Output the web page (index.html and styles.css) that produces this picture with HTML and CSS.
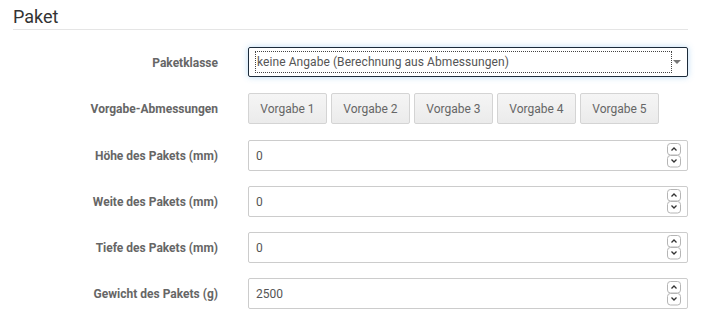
FILE: index.html
```html
<!DOCTYPE html>
<html lang="de">

<head>
    <meta charset="UTF-8">
    <meta name="viewport" content="width=device-width, initial-scale=1.0">
    <title>Paket</title>
    <link rel="stylesheet" href="styles.css">
</head>

<body>
    <section class="panel">
        <h2 class="panel-title">Paket</h2>

        <div class="form-grid">
            <label class="form-label">Paketklasse</label>
            <div class="select-box">
                <span class="select-text">keine Angabe (Berechnung aus Abmessungen)</span>
                <span class="select-arrow"></span>
            </div>

            <label class="form-label">Vorgabe-Abmessungen</label>
            <div class="preset-row">
                <button class="preset-btn">Vorgabe 1</button>
                <button class="preset-btn">Vorgabe 2</button>
                <button class="preset-btn">Vorgabe 3</button>
                <button class="preset-btn">Vorgabe 4</button>
                <button class="preset-btn">Vorgabe 5</button>
            </div>

            <label class="form-label">Höhe des Pakets (mm)</label>
            <div class="num-input">
                <span class="num-value">0</span>
                <svg class="spinner" width="14" height="25" viewBox="0 0 14 25">
                    <rect x="0.5" y="0.5" width="13" height="11.5" rx="3" fill="#fff" stroke="#b5b5b5"/>
                    <rect x="0.5" y="12.5" width="13" height="11.5" rx="3" fill="#fff" stroke="#b5b5b5"/>
                    <path d="M4.5 7.5 L7 5 L9.5 7.5" fill="none" stroke="#333" stroke-width="1.3"/>
                    <path d="M4.5 16.5 L7 19 L9.5 16.5" fill="none" stroke="#333" stroke-width="1.3"/>
                </svg>
            </div>

            <label class="form-label">Weite des Pakets (mm)</label>
            <div class="num-input">
                <span class="num-value">0</span>
                <svg class="spinner" width="14" height="25" viewBox="0 0 14 25">
                    <rect x="0.5" y="0.5" width="13" height="11.5" rx="3" fill="#fff" stroke="#b5b5b5"/>
                    <rect x="0.5" y="12.5" width="13" height="11.5" rx="3" fill="#fff" stroke="#b5b5b5"/>
                    <path d="M4.5 7.5 L7 5 L9.5 7.5" fill="none" stroke="#333" stroke-width="1.3"/>
                    <path d="M4.5 16.5 L7 19 L9.5 16.5" fill="none" stroke="#333" stroke-width="1.3"/>
                </svg>
            </div>

            <label class="form-label">Tiefe des Pakets (mm)</label>
            <div class="num-input">
                <span class="num-value">0</span>
                <svg class="spinner" width="14" height="25" viewBox="0 0 14 25">
                    <rect x="0.5" y="0.5" width="13" height="11.5" rx="3" fill="#fff" stroke="#b5b5b5"/>
                    <rect x="0.5" y="12.5" width="13" height="11.5" rx="3" fill="#fff" stroke="#b5b5b5"/>
                    <path d="M4.5 7.5 L7 5 L9.5 7.5" fill="none" stroke="#333" stroke-width="1.3"/>
                    <path d="M4.5 16.5 L7 19 L9.5 16.5" fill="none" stroke="#333" stroke-width="1.3"/>
                </svg>
            </div>

            <label class="form-label">Gewicht des Pakets (g)</label>
            <div class="num-input">
                <span class="num-value">2500</span>
                <svg class="spinner" width="14" height="25" viewBox="0 0 14 25">
                    <rect x="0.5" y="0.5" width="13" height="11.5" rx="3" fill="#fff" stroke="#b5b5b5"/>
                    <rect x="0.5" y="12.5" width="13" height="11.5" rx="3" fill="#fff" stroke="#b5b5b5"/>
                    <path d="M4.5 7.5 L7 5 L9.5 7.5" fill="none" stroke="#333" stroke-width="1.3"/>
                    <path d="M4.5 16.5 L7 19 L9.5 16.5" fill="none" stroke="#333" stroke-width="1.3"/>
                </svg>
            </div>
        </div>
    </section>
</body>

</html>
```

FILE: styles.css
```css
/* General Styles */

body {
    font-family: 'Roboto', sans-serif;
    margin: 0;
    padding: 0;
    background: #fff;
    color: #555;
}

.panel {
    padding: 6px 32px 0 13px;
}

.panel-title {
    font-size: 18px;
    font-weight: normal;
    color: #333;
    margin: 0;
    line-height: 22px;
    padding-bottom: 1px;
    border-bottom: 1px solid #e5e5e5;
}

.form-grid {
    display: grid;
    grid-template-columns: 205px 440px;
    grid-template-rows: 31px 32px repeat(4, 31px);
    column-gap: 30px;
    row-gap: 15px;
    margin-top: 17px;
    align-items: center;
}

.form-label {
    text-align: right;
    font-size: 12px;
    font-weight: bold;
    color: #666;
}

/* Select */

.select-box {
    position: relative;
    box-sizing: border-box;
    height: 30px;
    align-self: start;
    border: 1px solid #1c2b3a;
    border-radius: 2px;
    box-shadow: 0 0 6px rgba(102, 175, 233, 0.45);
    display: flex;
    align-items: center;
    padding: 0 16px 0 7px;
}

.select-text {
    flex: 1;
    font-size: 12px;
    letter-spacing: 0.07px;
    color: #555;
    line-height: 20px;
    padding: 0 1px;
    outline: 1px dotted #444;
}

.select-arrow {
    position: absolute;
    right: 6px;
    top: 12px;
    width: 0;
    height: 0;
    border-left: 4px solid transparent;
    border-right: 4px solid transparent;
    border-top: 4px solid #777;
}

/* Preset buttons */

.preset-row {
    display: flex;
    gap: 4px;
    height: 31px;
    align-self: start;
}

.preset-btn {
    width: 79px;
    height: 31px;
    font-family: 'Roboto', sans-serif;
    font-size: 12px;
    color: #666;
    background: linear-gradient(#f5f5f5, #ebebeb);
    border: 1px solid #d4d4d4;
    border-radius: 2px;
    padding: 0;
    cursor: pointer;
}

.preset-btn:hover {
    background: #e5e5e5;
}

/* Number inputs */

.num-input {
    box-sizing: border-box;
    height: 31px;
    border: 1px solid #ccc;
    border-radius: 2px;
    display: flex;
    align-items: center;
    padding: 0 6px 0 7px;
}

.num-value {
    flex: 1;
    font-size: 12px;
    color: #555;
}

.spinner {
    display: block;
}
```
